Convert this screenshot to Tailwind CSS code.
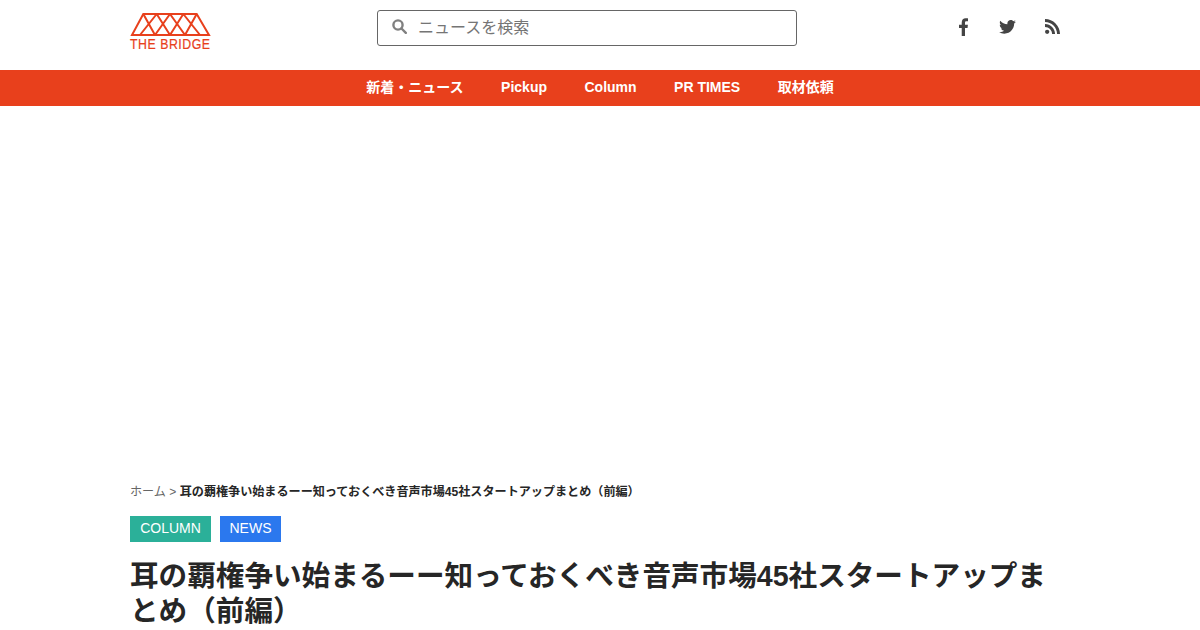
<!DOCTYPE html>
<html lang="ja">
<head>
<meta charset="utf-8">
<script src="https://cdn.jsdelivr.net/npm/@tailwindcss/browser@4"></script>
<title>THE BRIDGE</title>
</head>
<body class="bg-white h-[630px] overflow-hidden font-['Liberation_Sans','Noto_Sans_CJK_JP',sans-serif] text-[#262626]">
<header class="h-[70px] w-[940px] mx-auto flex">
  <a class="block w-[81px] mt-[13px]">
    <svg width="81" height="23" viewBox="0 0 81 23" fill="none" stroke="#e8401c" stroke-width="2" class="block">
      <path d="M13.300 1H66.700L79 22H2Z"/>
      <path d="M13.300 1L25 22M26.700 1L10 22M26.700 1L40 22M40 1L25 22M40 1L55 22M53.300 1L40 22M53.300 1L70 22M66.700 1L55 22"/>
    </svg>
    <span class="block origin-left scale-x-[0.88] tracking-[0.6px] text-[#e8401c] text-[14px] leading-[14px] whitespace-nowrap mt-[1px] [-webkit-text-stroke:0.2px_#e8401c]">THE BRIDGE</span>
  </a>
  <div class="ml-[166px] mt-[10px] w-[420px] h-[36px] border border-[#666] rounded-[3px] flex items-center pl-[14px]">
    <svg width="15" height="15" viewBox="0 0 15 15" fill="none" stroke="#808080" stroke-width="2.400" class="-mt-[4px]"><circle cx="6" cy="6" r="4.600"/><path d="M9.500 9.500L13.800 13.800" stroke-linecap="round"/></svg>
    <span class="ml-[11px] text-[16px] text-[#757575]">ニュースを検索</span>
  </div>
  <div class="ml-auto mr-[10px] flex items-center gap-[30px] h-[53px]">
    <svg width="10" height="18" viewBox="0 0 11 19" fill="#444" preserveAspectRatio="none"><path d="M3 19V10.500H0V7.200H3V4.700C3 1.800 4.800 0.200 7.300 0.200C8.500 0.200 9.600 0.300 9.900 0.400V3.300H8.200C6.800 3.300 6.600 4 6.600 4.900V7.200H9.800L9.400 10.500H6.600V19Z"/></svg>
    <svg width="17" height="14" viewBox="0 0 24 20" fill="#444" class="-mr-[1px]"><path d="M24 2.400c-.9.4-1.800.7-2.800.8 1-.6 1.800-1.600 2.200-2.700-.9.6-2 1-3.100 1.200C19.400.7 18.100 0 16.700 0c-2.700 0-4.900 2.200-4.900 4.900 0 .4 0 .8.100 1.100C7.800 5.800 4.200 3.900 1.700.9c-.4.7-.7 1.600-.7 2.500 0 1.700.9 3.200 2.200 4.100-.8 0-1.600-.2-2.200-.6v.1c0 2.400 1.700 4.400 3.900 4.800-.4.100-.8.200-1.300.2-.3 0-.6 0-.9-.1.600 2 2.400 3.400 4.600 3.400-1.700 1.300-3.800 2.100-6.100 2.100-.4 0-.8 0-1.200-.1C2.200 18.700 4.800 19.500 7.500 19.500c9.100 0 14-7.500 14-14v-.6c1-.7 1.800-1.600 2.500-2.500z"/></svg>
    <svg width="15" height="15" viewBox="0 0 16 16" fill="#444"><circle cx="2.300" cy="13.700" r="2.300"/><path d="M0 5.300v3.100c4.200 0 7.600 3.400 7.600 7.600h3.100C10.700 10.100 5.900 5.300 0 5.300z"/><path d="M0 0v3.100C7.100 3.100 12.900 8.900 12.900 16H16C16 7.200 8.800 0 0 0z"/></svg>
  </div>
</header>
<nav class="h-[36px] pb-[2px] bg-[#e8401c] flex justify-center items-center gap-[37.500px] text-white text-[14px] font-bold">
  <a>新着・ニュース</a><a>Pickup</a><a>Column</a><a>PR TIMES</a><a>取材依頼</a>
</nav>
<main class="w-[940px] mx-auto pt-[378px]">
  <p class="text-[12.100px] leading-[17px] text-[#666] whitespace-nowrap">ホーム &gt; <b class="text-[#262626]">耳の覇権争い始まるーー知っておくべき音声市場45社スタートアップまとめ（前編）</b></p>
  <div class="flex gap-[9px] mt-[15px]">
    <span class="h-[26px] w-[81px] text-center bg-[#2bb099] text-white text-[14px] leading-[25px]">COLUMN</span>
    <span class="h-[26px] w-[61px] text-center bg-[#2b78ee] text-white text-[14px] leading-[25px]">NEWS</span>
  </div>
  <h1 class="mt-[17px] text-[28.600px] leading-[35px] font-bold text-[#262626]">耳の覇権争い始まるーー知っておくべき音声市場45社スタートアップまとめ（前編）</h1>
</main>
</body>
</html>
